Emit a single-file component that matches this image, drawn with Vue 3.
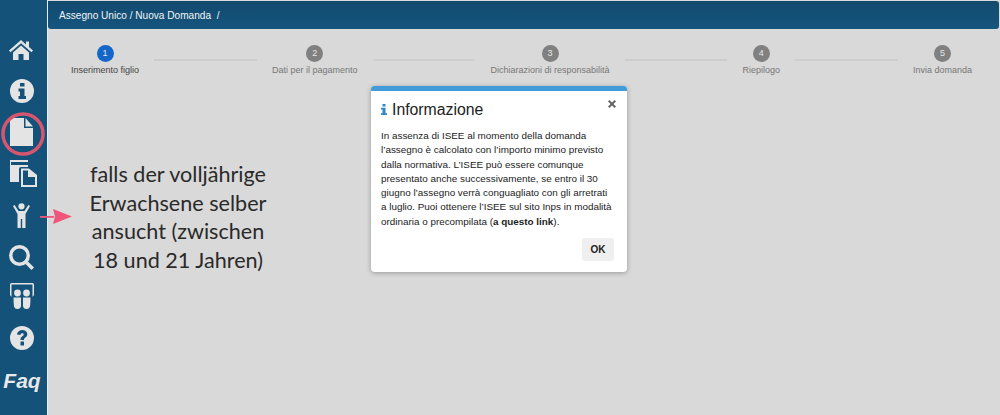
<script setup>
const steps = [
  { n: 1, label: 'Inserimento figlio', active: true },
  { n: 2, label: 'Dati per il pagamento' },
  { n: 3, label: 'Dichiarazioni di responsabilità' },
  { n: 4, label: 'Riepilogo' },
  { n: 5, label: 'Invia domanda' }
]
</script>

<template>
  <div class="page">
    <aside class="side">
      <svg class="ic home" viewBox="0 0 24 20"><path d="M12 0 L0 10.500 L1.500 12.300 L12 3.200 L22.500 12.300 L24 10.500 L20 7 V1.500 H17 V4.400 Z" /><path d="M4 12.500 L12 5.500 L20 12.500 V20 H14.500 V14 H9.500 V20 H4 Z" /></svg>
      <svg class="ic info" viewBox="0 0 24 24"><path fill-rule="evenodd" d="M12 0a12 12 0 1 0 0 24a12 12 0 0 0 0-24ZM10 4h4.500v3.500H10ZM8.500 9.500H14.500V17H16V20H8.500V17H10V12.500H8.500Z" /></svg>
      <svg class="ic file" viewBox="0 0 23 28"><path d="M0 0H14V10H23V28H0Z" /><path d="M15.500 0L23 8.500H15.500Z" /></svg>
      <svg class="ic copies" viewBox="0 0 27 27"><path d="M0 0H18V2H1V5H18V7H11A2 2 0 0 0 9 9V22H0Z" /><path fill-rule="evenodd" d="M11 8.500H19L27 15V27H11ZM13 10.500V25H25V17H18V10.500Z" /><path d="M20 10.500L25 15H20Z" /></svg>
      <svg class="ic person" viewBox="0 0 17 25"><circle cx="8.500" cy="3.300" r="3.100" /><path d="M0 3L1.600 2L5.500 8H11.500L15.400 2L17 3L12.500 11V25H9.200V16H7.800V25H4.500V11Z" /></svg>
      <svg class="ic search" viewBox="0 0 25 25"><path fill-rule="evenodd" d="M10.500 0a10.500 10.500 0 1 0 0 21a10.500 10.500 0 0 0 0-21ZM10.500 3.500a7 7 0 1 1 0 14a7 7 0 0 1 0-14Z" /><path d="M16.500 19L19 16.500L25 22.500L22.500 25Z" /></svg>
      <svg class="ic share" viewBox="0 0 24 27"><path fill-rule="evenodd" d="M1.500 0H22.500A1.500 1.500 0 0 1 24 1.500V12L22.500 14V1.500H1.500V14L0 12V1.500A1.500 1.500 0 0 1 1.500 0Z" /><circle cx="7.500" cy="10" r="3.400" /><circle cx="16.500" cy="10" r="3.400" /><path d="M3.500 14.500H11V23A3.600 3.600 0 0 1 4 23.500Q3.500 19 3.500 14.500ZM13 14.500H20.500Q20.500 19 20 23.500A3.600 3.600 0 0 1 13 23Z" /></svg>
      <svg class="ic help" viewBox="0 0 24 24"><path fill-rule="evenodd" d="M12 0a12 12 0 1 0 0 24a12 12 0 0 0 0-24ZM7 8.500C7.500 5.500 9.500 4 12.300 4C15.200 4 17.300 5.800 17.300 8.300C17.300 10.300 16 11.200 14.800 12C14 12.500 14 13 14 14H10.500C10.500 12 11 11 12.300 10.200C13.200 9.600 13.700 9.200 13.700 8.500C13.700 7.700 13 7.200 12.200 7.200C11.300 7.200 10.700 7.800 10.300 9ZM10.500 15.500H14V19.500H10.500Z" /></svg>
      <span class="faq">Faq</span>
    </aside>

    <main class="main">
      <header class="bar">Assegno Unico / Nuova Domanda&nbsp;&nbsp;/</header>
      <ol class="stepper">
        <template v-for="(s, i) in steps" :key="s.n">
          <li v-if="i > 0" class="line"></li>
          <li class="step" :class="{ active: s.active }">
            <span class="dot">{{ s.n }}</span>
            <span class="label">{{ s.label }}</span>
          </li>
        </template>
      </ol>
    </main>

    <section class="modal">
      <button class="close" type="button">
        <svg viewBox="0 0 10 10" width="8" height="8"><path d="M1.800 0L5 3.200L8.200 0L10 1.800L6.800 5L10 8.200L8.200 10L5 6.800L1.800 10L0 8.200L3.200 5L0 1.800Z" /></svg>
      </button>
      <h2 class="title">
        <svg class="i" viewBox="0 0 6 11"><path d="M1.500 0H4.500V2.500H1.500ZM0 3.800H4.500V9.300H6V11H0V9.300H1.500V5.500H0Z" /></svg>
        Informazione
      </h2>
      <p class="body">In assenza di ISEE al momento della domanda l’assegno è calcolato con l’importo minimo previsto dalla normativa. L’ISEE può essere comunque presentato anche successivamente, se entro il 30 giugno l’assegno verrà conguagliato con gli arretrati a luglio. Puoi ottenere l’ISEE sul sito Inps in modalità ordinaria o precompilata (<b>a questo link</b>).</p>
      <div class="foot"><button class="ok" type="button">OK</button></div>
    </section>

    <svg class="ring" viewBox="0 0 46 46"><circle cx="23" cy="23" r="20" /></svg>
    <svg class="arrow" viewBox="0 0 32 16"><path d="M0 7H14V8.800H0Z" /><path d="M13 0L32 7.500L13 15L15 7.500Z" /></svg>
    <p class="note">falls der volljährige<br />Erwachsene selber<br />ansucht (zwischen<br />18 und 21 Jahren)</p>
  </div>
</template>

<style>
html, body { margin: 0; background: #d9d9d9; }
</style>

<style scoped>
.page {
  position: relative;
  width: 1000px;
  height: 415px;
  overflow: hidden;
  display: flex;
  background: #d9d9d9;
  font-family: "Liberation Sans", Arial, sans-serif;
}
.side {
  width: 48px;
  flex: none;
  box-sizing: border-box;
  padding-top: 40px;
  display: flex;
  flex-direction: column;
  align-items: center;
  background: #14527a;
  border-right: 1px solid #e9eef2;
}
.ic { display: block; fill: #e4e4e4; flex: none; }
.home { width: 24px; height: 20px; margin-left: -5px; }
.info { width: 24px; height: 24px; margin-top: 19px; margin-left: -3px; }
.file { width: 23px; height: 28px; margin-top: 15px; margin-left: -4px; }
.copies { width: 27px; height: 27px; margin-top: 14px; margin-left: -1px; }
.person { width: 17px; height: 25px; margin-top: 16px; margin-left: -4px; }
.search { width: 25px; height: 25px; margin-top: 17px; margin-left: -4px; }
.share { width: 24px; height: 27px; margin-top: 13px; margin-left: -4px; }
.help { width: 24px; height: 24px; margin-top: 16px; margin-left: -4px; }
.faq {
  margin-top: 19px;
  margin-left: -3px;
  color: #e9e9e9;
  font: italic 700 21px/24px "Liberation Sans", Arial, sans-serif;
}
.main { flex: 1; min-width: 0; }
.bar {
  height: 28px;
  margin: 1px 1px 0 0;
  box-sizing: border-box;
  padding-left: 11px;
  background: linear-gradient(#124a6e, #15557e);
  border-radius: 0 3px 3px 3px;
  color: #f1f4f6;
  font-size: 10.100px;
  line-height: 29px;
}
.stepper {
  list-style: none;
  margin: 16px 0 0 23px;
  padding: 0;
  width: 901px;
  display: flex;
  gap: 15px;
  align-items: flex-start;
}
.line { flex: 1; height: 2px; margin-top: 14px; background: #cdcdcd; }
.step {
  display: flex;
  flex-direction: column;
  align-items: center;
  gap: 3px;
}
.dot {
  width: 17px;
  height: 17px;
  border-radius: 50%;
  background: #808080;
  color: #e6e6e6;
  font-size: 9px;
  line-height: 17px;
  text-align: center;
}
.label { color: #777; font-size: 9px; line-height: 11px; white-space: nowrap; }
.active .dot { background: #1467c9; }
.active .label { color: #444; }
.modal {
  position: absolute;
  left: 371px;
  top: 86px;
  width: 256px;
  height: 186px;
  box-sizing: border-box;
  padding: 0 13px 0 10px;
  background: #fff;
  border-top: 5px solid #409bd9;
  border-radius: 4px;
  box-shadow: 0 1px 5px rgba(0, 0, 0, 0.3);
}
.close {
  position: absolute;
  top: 9px;
  right: 11px;
  padding: 0;
  border: 0;
  background: none;
  line-height: 0;
  fill: #666;
}
.title {
  margin: 0;
  padding-top: 9px;
  display: flex;
  align-items: center;
  gap: 5px;
  color: #222;
  font-size: 15.800px;
  font-weight: 400;
  line-height: 20px;
}
.i { width: 6px; height: 11px; fill: #2f86c9; margin-top: -1px; }
.body {
  margin: 9px 0 0;
  color: #222;
  font-size: 9.900px;
  line-height: 14.300px;
}
.foot { display: flex; justify-content: flex-end; margin-top: 9px; }
.ok {
  width: 32px;
  height: 23px;
  padding: 0;
  border: 0;
  border-radius: 3px;
  background: #efefef;
  color: #222;
  font: 700 10px/23px "Liberation Sans", Arial, sans-serif;
}
.ring {
  position: absolute;
  left: 0;
  top: 111px;
  width: 46px;
  height: 46px;
  fill: none;
  stroke: #d5566e;
  stroke-width: 3.500px;
}
.arrow {
  position: absolute;
  left: 40px;
  top: 209px;
  width: 32px;
  height: 16px;
  fill: #f2557c;
}
.note {
  position: absolute;
  left: 73px;
  top: 160px;
  width: 210px;
  margin: 0;
  color: #2a2a2a;
  font: 400 21.600px/28.700px Lato, sans-serif;
  text-align: center;
}
</style>
